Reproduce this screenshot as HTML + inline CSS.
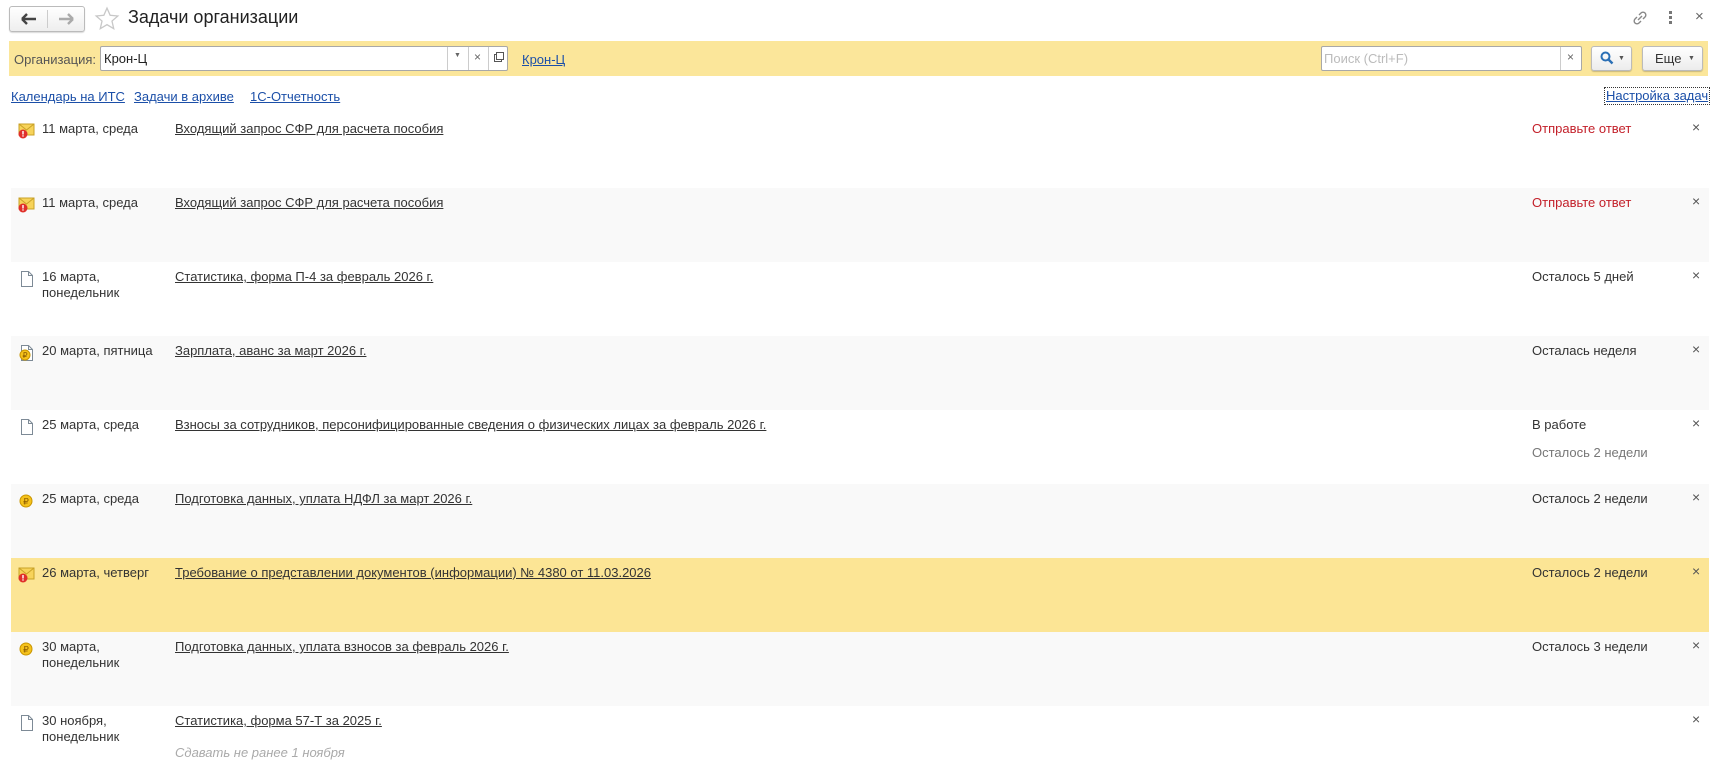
<!DOCTYPE html>
<html><head><meta charset="utf-8"><style>
*{box-sizing:border-box;margin:0;padding:0}
body{width:1725px;height:765px;overflow:hidden;background:#fff;font-family:"Liberation Sans",Arial,sans-serif;font-size:13px;color:#333;position:relative}
.a{position:absolute}
.nav{left:9px;top:6px;width:76px;height:26px;border:1px solid #bbb;border-radius:3px;background:linear-gradient(#fff,#eee);box-shadow:0 1px 1px rgba(0,0,0,.15)}
.bar{left:9px;top:41px;width:1699px;height:35px;background:#fbe69a}
.inp{background:#fff;border:1px solid #a8a8a8;border-radius:2px;height:25px}
.btn{border:1px solid #bbb;border-radius:3px;background:linear-gradient(#fff,#ececec);box-shadow:0 1px 1px rgba(0,0,0,.2);height:25px}
.lnk{color:#1b4fa8;text-decoration:underline}
.row{position:absolute;left:11px;width:1698px;height:74px}
.row .ic{position:absolute;left:7px;top:8px}
.row .d{position:absolute;left:31px;top:7px;line-height:16px}
.row .t{position:absolute;left:164px;top:7px;text-decoration:underline;color:#333}
.row .s{position:absolute;left:1521px;top:7px}
.row .x{position:absolute;left:1681px;top:5px;font-size:14px;color:#555}
.red{color:#c3202a}
.g{background:#f9f9f9}.y{background:#fce595}
</style></head><body>
<div class="a nav"><div style="position:absolute;left:37px;top:3px;width:1px;height:18px;background:#ccc"></div>
<svg class="a" style="left:11px;top:6px" width="16" height="12" viewBox="0 0 16 12"><path d="M1 6h14M1 6l5-5M1 6l5 5" stroke="#444" stroke-width="2.4" fill="none"/></svg>
<svg class="a" style="left:48px;top:6px" width="16" height="12" viewBox="0 0 16 12"><path d="M15 6H1M15 6l-5-5M15 6l-5 5" stroke="#aaa" stroke-width="2.4" fill="none"/></svg></div>
<svg class="a" style="left:94px;top:6px" width="26" height="26" viewBox="0 0 24 24"><path d="M12 2l2.9 6.6 7.1.6-5.4 4.7 1.6 7-6.2-3.7-6.2 3.7 1.6-7L2 9.2l7.1-.6z" fill="none" stroke="#c8c8c8" stroke-width="1.2"/></svg>
<div class="a" style="left:128px;top:7px;font-size:18px;color:#222">Задачи организации</div>
<svg class="a" style="left:1631px;top:9px" width="18" height="18" viewBox="0 0 18 18"><g fill="none" stroke="#888" stroke-width="1.4"><path d="M7 11l4-4"/><path d="M8 6l2-2a2.5 2.5 0 0 1 4 4l-2 2"/><path d="M10 12l-2 2a2.5 2.5 0 0 1-4-4l2-2"/></g></svg>
<div class="a" style="left:1669px;top:11px;width:3px"><div style="width:3px;height:3px;background:#777;margin-bottom:2px"></div><div style="width:3px;height:3px;background:#777;margin-bottom:2px"></div><div style="width:3px;height:3px;background:#777"></div></div>
<div class="a" style="left:1695px;top:8px;font-size:15px;color:#666">×</div>
<div class="a bar"></div>
<div class="a" style="left:14px;top:52px;color:#555">Организация:</div>
<div class="a inp" style="left:100px;top:46px;width:408px"></div>
<div class="a" style="left:104px;top:51px;color:#222">Крон-Ц</div>
<div class="a" style="left:447px;top:47px;width:1px;height:23px;background:#ccc"></div>
<div class="a" style="left:468px;top:47px;width:1px;height:23px;background:#ccc"></div>
<div class="a" style="left:488px;top:47px;width:1px;height:23px;background:#ccc"></div>
<div class="a" style="left:454px;top:52px;font-size:7px;color:#666">▼</div>
<div class="a" style="left:474px;top:50px;font-size:12px;color:#666">×</div>
<div class="a" style="left:494px;top:54px;width:8px;height:8px;border:1px solid #555"></div>
<div class="a" style="left:496px;top:52px;width:8px;height:8px;border:1px solid #555;background:#fff"></div>
<div class="a lnk" style="left:522px;top:52px">Крон-Ц</div>
<div class="a inp" style="left:1321px;top:46px;width:261px"></div>
<div class="a" style="left:1324px;top:51px;color:#bbb">Поиск (Ctrl+F)</div>
<div class="a" style="left:1560px;top:47px;width:1px;height:23px;background:#ccc"></div>
<div class="a" style="left:1567px;top:50px;font-size:12px;color:#666">×</div>
<div class="a btn" style="left:1591px;top:46px;width:41px"></div>
<svg class="a" style="left:1600px;top:51px" width="14" height="14" viewBox="0 0 14 14"><circle cx="5.5" cy="5.5" r="4" fill="none" stroke="#2a6fb5" stroke-width="2"/><path d="M8.5 8.5l4 4" stroke="#2a6fb5" stroke-width="2.4"/></svg>
<div class="a" style="left:1618px;top:55px;font-size:7px;color:#555">▼</div>
<div class="a btn" style="left:1642px;top:46px;width:61px"></div>
<div class="a" style="left:1655px;top:51px;color:#333">Еще</div>
<div class="a" style="left:1688px;top:55px;font-size:7px;color:#555">▼</div>
<div class="a lnk" style="left:11px;top:89px">Календарь на ИТС</div>
<div class="a lnk" style="left:134px;top:89px">Задачи в архиве</div>
<div class="a lnk" style="left:250px;top:89px">1С-Отчетность</div>
<div class="a lnk" style="left:1604px;top:87px;border:1px dotted #333;padding:0 1px;line-height:16px">Настройка задач</div>

<div class="row" style="top:114px"><svg class="ic" width="18" height="18" viewBox="0 0 18 18"><rect x="1" y="2" width="15" height="11" fill="#f7d35a" stroke="#c9a227"/><path d="M1 2l7.5 6L16 2" fill="none" stroke="#c9a227"/><circle cx="5" cy="12" r="4.5" fill="#e0302a"/><rect x="4.3" y="9" width="1.4" height="3.5" fill="#fff"/><rect x="4.3" y="13.3" width="1.4" height="1.3" fill="#fff"/></svg><div class="d">11 марта, среда</div><div class="t">Входящий запрос СФР для расчета пособия</div><div class="s red">Отправьте ответ</div><div class="x">×</div></div>
<div class="row g" style="top:188px"><svg class="ic" width="18" height="18" viewBox="0 0 18 18"><rect x="1" y="2" width="15" height="11" fill="#f7d35a" stroke="#c9a227"/><path d="M1 2l7.5 6L16 2" fill="none" stroke="#c9a227"/><circle cx="5" cy="12" r="4.5" fill="#e0302a"/><rect x="4.3" y="9" width="1.4" height="3.5" fill="#fff"/><rect x="4.3" y="13.3" width="1.4" height="1.3" fill="#fff"/></svg><div class="d">11 марта, среда</div><div class="t">Входящий запрос СФР для расчета пособия</div><div class="s red">Отправьте ответ</div><div class="x">×</div></div>
<div class="row" style="top:262px"><svg class="ic" width="18" height="18" viewBox="0 0 18 18"><path d="M3.5 1.5h7l4 4v11h-11z" fill="#fff" stroke="#7d8a96"/><path d="M10.5 1.5v4h4" fill="none" stroke="#7d8a96"/></svg><div class="d">16 марта,<br>понедельник</div><div class="t">Статистика, форма П-4 за февраль 2026 г.</div><div class="s">Осталось 5 дней</div><div class="x">×</div></div>
<div class="row g" style="top:336px"><svg class="ic" width="18" height="18" viewBox="0 0 18 18"><path d="M3.5 1.5h7l4 4v11h-11z" fill="#fff" stroke="#7d8a96"/><path d="M10.5 1.5v4h4" fill="none" stroke="#7d8a96"/><circle cx="7" cy="11" r="5" fill="#f5c21b" stroke="#c99500"/><text x="7" y="14" font-size="8" text-anchor="middle" fill="#8a5a00" font-family="Liberation Sans">₽</text></svg><div class="d">20 марта, пятница</div><div class="t">Зарплата, аванс за март 2026 г.</div><div class="s">Осталась неделя</div><div class="x">×</div></div>
<div class="row" style="top:410px"><svg class="ic" width="18" height="18" viewBox="0 0 18 18"><path d="M3.5 1.5h7l4 4v11h-11z" fill="#fff" stroke="#7d8a96"/><path d="M10.5 1.5v4h4" fill="none" stroke="#7d8a96"/></svg><div class="d">25 марта, среда</div><div class="t">Взносы за сотрудников, персонифицированные сведения о физических лицах за февраль 2026 г.</div><div class="s">В работе</div><div class="s" style="top:35px;color:#777">Осталось 2 недели</div><div class="x">×</div></div>
<div class="row g" style="top:484px"><svg class="ic" width="18" height="18" viewBox="0 0 18 18"><circle cx="8" cy="9" r="6" fill="#f5c21b" stroke="#c99500"/><text x="8" y="12.5" font-size="9" text-anchor="middle" fill="#8a5a00" font-family="Liberation Sans">₽</text></svg><div class="d">25 марта, среда</div><div class="t">Подготовка данных, уплата НДФЛ за март 2026 г.</div><div class="s">Осталось 2 недели</div><div class="x">×</div></div>
<div class="row y" style="top:558px"><svg class="ic" width="18" height="18" viewBox="0 0 18 18"><rect x="1" y="2" width="15" height="11" fill="#f7d35a" stroke="#c9a227"/><path d="M1 2l7.5 6L16 2" fill="none" stroke="#c9a227"/><circle cx="5" cy="12" r="4.5" fill="#e0302a"/><rect x="4.3" y="9" width="1.4" height="3.5" fill="#fff"/><rect x="4.3" y="13.3" width="1.4" height="1.3" fill="#fff"/></svg><div class="d">26 марта, четверг</div><div class="t">Требование о представлении документов (информации) № 4380 от 11.03.2026</div><div class="s">Осталось 2 недели</div><div class="x">×</div></div>
<div class="row g" style="top:632px"><svg class="ic" width="18" height="18" viewBox="0 0 18 18"><circle cx="8" cy="9" r="6" fill="#f5c21b" stroke="#c99500"/><text x="8" y="12.5" font-size="9" text-anchor="middle" fill="#8a5a00" font-family="Liberation Sans">₽</text></svg><div class="d">30 марта,<br>понедельник</div><div class="t">Подготовка данных, уплата взносов за февраль 2026 г.</div><div class="s">Осталось 3 недели</div><div class="x">×</div></div>
<div class="row" style="top:706px"><svg class="ic" width="18" height="18" viewBox="0 0 18 18"><path d="M3.5 1.5h7l4 4v11h-11z" fill="#fff" stroke="#7d8a96"/><path d="M10.5 1.5v4h4" fill="none" stroke="#7d8a96"/></svg><div class="d">30 ноября,<br>понедельник</div><div class="t">Статистика, форма 57-Т за 2025 г.</div><div class="t" style="top:39px;text-decoration:none;color:#aaa;font-style:italic">Сдавать не ранее 1 ноября</div><div class="x">×</div></div>
</body></html>
